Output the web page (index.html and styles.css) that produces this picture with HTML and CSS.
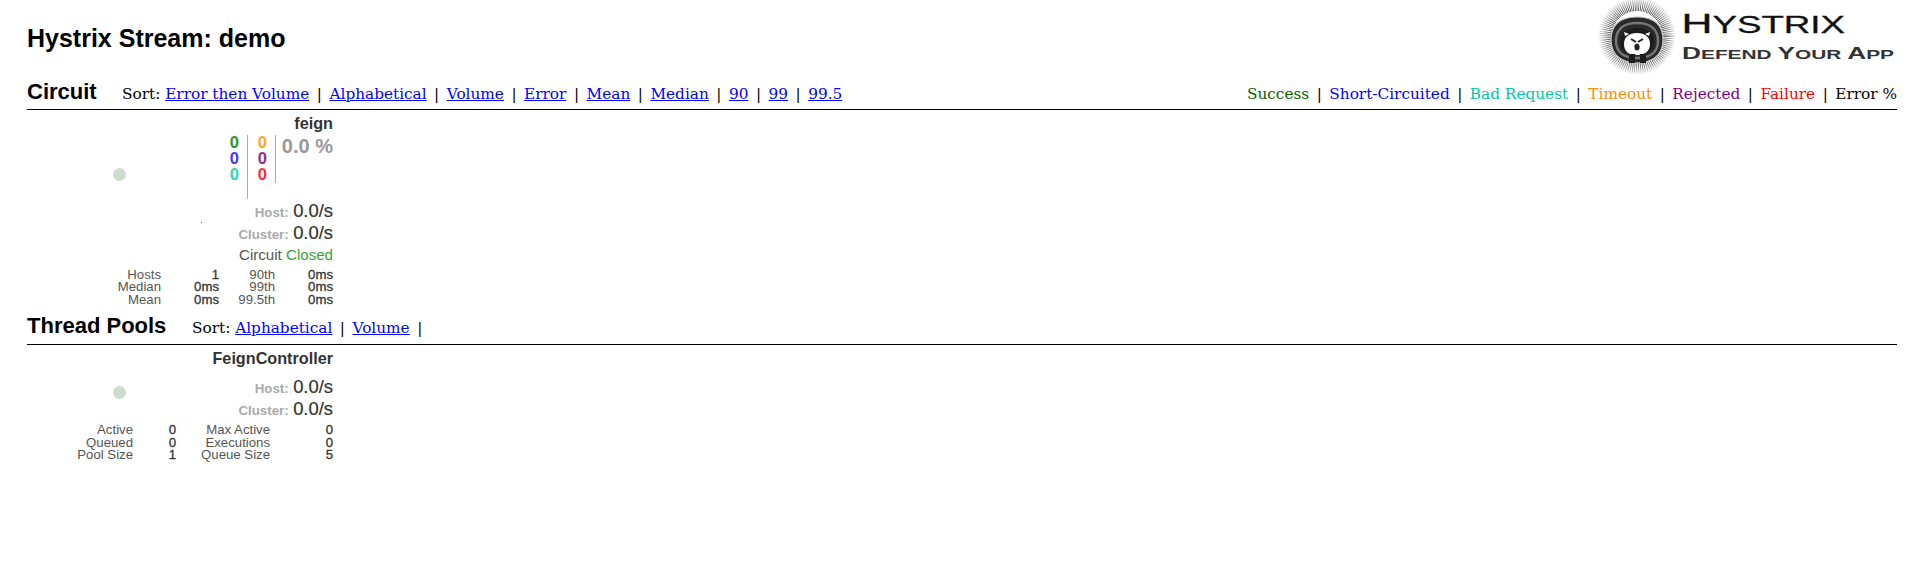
FILE: index.html
```html
<!DOCTYPE html>
<html lang="en">
<head>
<meta charset="utf-8">
<title>Hystrix Stream: demo</title>
<link rel="stylesheet" href="styles.css">
</head>
<body>
<header class="page-header">
  <h1 class="page-title">Hystrix Stream: demo</h1>
  <svg class="logo" width="300" height="75" viewBox="0 0 300 75" aria-label="Hystrix logo">
    <defs>
      <radialGradient id="halo" gradientUnits="userSpaceOnUse" cx="40" cy="36" r="39">
        <stop offset="0.6" stop-color="#222"/>
        <stop offset="0.8" stop-color="#888"/>
        <stop offset="1" stop-color="#fff"/>
      </radialGradient>
      <filter id="soft" x="-10%" y="-10%" width="120%" height="120%"><feGaussianBlur stdDeviation="0.45"/></filter>
    </defs>
    <g filter="url(#soft)">
      <circle class="spikes" cx="40" cy="36" r="32"/>
      <path d="M14 40C14 24 24 17 40 17S66 24 66 40S54 63 40 63S14 56 14 40Z" fill="#2a2a2a" stroke="#ccc" stroke-width="1.2"/>
      <path d="M19 41C19 29 27 23 40 23S61 29 61 41S52 58 40 58S19 53 19 41Z" fill="none" stroke="#777" stroke-width="2.5"/>
      <path d="M23 42C23 33 30 28 40 28S57 33 57 42S50 55 40 55S23 51 23 42Z" fill="#1c1c1c"/>
      <path d="M27 44C27 37 32 33 40 33S53 37 53 44S48 55 40 55S27 52 27 44Z" fill="#fff"/>
      <path d="M28 36L27 32L32 34M52 36L53 32L48 34" fill="#fff"/>
      <path d="M34 39L39 42M46 39L41 42" stroke="#222" stroke-width="2"/>
      <ellipse cx="40" cy="47" rx="2.6" ry="3.6" fill="#222"/>
      <path d="M32 54h6v9h-6zM43 54h6v9h-6z" fill="#1a1a1a"/>
    </g>
    <text class="logo-big" x="84.5" y="33" textLength="163.5" lengthAdjust="spacingAndGlyphs">H<tspan class="logo-big-sc">YSTRIX</tspan></text>
    <text class="logo-small" x="85" y="59" textLength="212" lengthAdjust="spacingAndGlyphs">D<tspan class="logo-small-sc">EFEND </tspan>Y<tspan class="logo-small-sc">OUR </tspan>A<tspan class="logo-small-sc">PP</tspan></text>
  </svg>
</header>

<section class="section-head">
  <h2 class="section-title">Circuit</h2>
  <div class="sort circuit-sort">Sort: <a href="#">Error then Volume</a><i>|</i><a href="#">Alphabetical</a><i>|</i><a href="#">Volume</a><i>|</i><a href="#">Error</a><i>|</i><a href="#">Mean</a><i>|</i><a href="#">Median</a><i>|</i><a href="#">90</a><i>|</i><a href="#">99</a><i>|</i><a href="#">99.5</a></div>
  <div class="legend"><span class="c-success">Success</span><i>|</i><span class="c-short">Short-Circuited</span><i>|</i><span class="c-bad">Bad Request</span><i>|</i><span class="c-timeout">Timeout</span><i>|</i><span class="c-rejected">Rejected</span><i>|</i><span class="c-failure">Failure</span><i>|</i><span>Error %</span></div>
</section>

<article class="monitor circuit">
  <div class="name">feign</div>
  <div class="circuit-top">
    <div class="dot-wrap"><span class="dot"></span></div>
    <div class="counts tall">
      <span class="n-success">0</span><span class="n-short">0</span><span class="n-bad">0</span>
    </div>
    <div class="counts">
      <span class="n-timeout">0</span><span class="n-rejected">0</span><span class="n-failure">0</span>
    </div>
    <div class="error-rate">0.0 %</div>
  </div>
  <div class="rate-row"><span class="rate-label">Host:</span> <span class="rate-value">0.0/s</span></div>
  <div class="rate-row"><span class="rate-label">Cluster:</span> <span class="rate-value">0.0/s</span></div>
  <div class="status">Circuit <span class="closed">Closed</span></div>
  <div class="stats stats-circuit">
    <span>Hosts</span><b>1</b><span>90th</span><b>0ms</b>
    <span>Median</span><b>0ms</b><span>99th</span><b>0ms</b>
    <span>Mean</span><b>0ms</b><span>99.5th</span><b>0ms</b>
  </div>
  <span class="speck"></span>
</article>

<section class="section-head pools-head">
  <h2 class="section-title">Thread Pools</h2>
  <div class="sort pool-sort">Sort: <a href="#">Alphabetical</a><i>|</i><a href="#">Volume</a><i>|</i></div>
</section>

<article class="monitor pool">
  <div class="name pool-name">FeignController</div>
  <div class="pool-top">
    <div class="dot-wrap"><span class="dot"></span></div>
    <div class="pool-rates">
      <div class="rate-row"><span class="rate-label">Host:</span> <span class="rate-value">0.0/s</span></div>
      <div class="rate-row"><span class="rate-label">Cluster:</span> <span class="rate-value">0.0/s</span></div>
    </div>
  </div>
  <div class="stats stats-pool">
    <span>Active</span><b>0</b><span>Max Active</span><b>0</b>
    <span>Queued</span><b>0</b><span>Executions</span><b>0</b>
    <span>Pool Size</span><b>1</b><span>Queue Size</span><b>5</b>
  </div>
</article>
</body>
</html>
```
FILE: styles.css
```css
* { box-sizing: border-box; }
html, body { margin: 0; padding: 0; background: #fff; }
body { width: 1916px; height: 575px; overflow: hidden; padding: 0 19px 0 27px; font-family: "Liberation Sans", Arial, sans-serif; color: #000; }

.page-header { height: 77px; display: flex; justify-content: space-between; align-items: flex-start; }
.page-title { margin: 24px 0 0; font-size: 25px; line-height: 28px; font-weight: bold; }
.logo { flex: none; }
.spikes { fill: none; stroke: url(#halo); stroke-width: 14; stroke-dasharray: 1 1; }
.logo-big { font-family: "Liberation Sans", sans-serif; font-size: 28px; fill: #111; stroke: #111; stroke-width: .3; }
.logo-big-sc { font-size: 24px; }
.logo-small { font-family: "Liberation Sans", sans-serif; font-size: 17px; font-weight: bold; fill: #333; }
.logo-small-sc { font-size: 13.5px; }

.section-head { height: 33px; border-bottom: 1px solid #000; display: flex; align-items: flex-start; }
.section-title { margin: 1px 0 0; font-size: 22px; line-height: 28px; font-weight: bold; width: 95px; flex: none; }
.sort, .legend { font-family: "DejaVu Serif", serif; font-size: 15.3px; line-height: 20px; margin-top: 7px; white-space: nowrap; }
.sort i, .legend i { font-style: normal; margin: 0 7.5px; color: #000; }
a { color: #00f; text-decoration: underline; }
.legend { margin-left: auto; }
.c-success { color: #006400; }
.c-short { color: #00f; }
.c-bad { color: #00c8a0; }
.c-timeout { color: #ff8c00; }
.c-rejected { color: #800080; }
.c-failure { color: #f00; }

.monitor { width: 306px; position: relative; color: #333; }
.circuit { height: 200px; }
.name { text-align: right; font-size: 16.2px; font-weight: bold; line-height: 18px; padding-top: 4px; height: 25px; color: #333; }
.circuit-top { display: flex; height: 65px; }
.dot-wrap { width: 184px; flex: none; display: flex; justify-content: center; padding-top: 33px; }
.dot { width: 13px; height: 13px; border-radius: 50%; background: #cddccd; display: block; }
.counts span { display: block; font-size: 16.5px; line-height: 16px; font-weight: bold; text-align: right; }
.counts span:first-child { margin-top: -1px; }
.n-success { color: #2a9a2a; }
.n-short { color: #3c3cff; }
.n-bad { color: #2fd8ae; }
.n-timeout { color: #ffa62b; }
.n-rejected { color: #902d90; }
.n-failure { color: #ff2d3c; }
.counts { flex: none; width: 28px; padding-right: 8px; border-right: 1px solid #aaa; height: 48px; }
.counts.tall { width: 37px; height: 64px; }
.error-rate { flex: 1; text-align: right; font-size: 20px; font-weight: bold; color: #999; line-height: 20px; white-space: nowrap; padding-top: 1px; }

.rate-row { text-align: right; line-height: 22px; height: 21px; white-space: nowrap; }
.rate-row + .rate-row { margin-top: 1px; }
.rate-label { font-size: 13.3px; font-weight: bold; color: #aaa; }
.rate-value { font-size: 18.4px; color: #333; -webkit-text-stroke: 0.2px #333; }
.status { text-align: right; font-size: 15.1px; line-height: 22px; color: #555; margin-top: 1px; }
.closed { color: #3a9f3a; }

.stats { display: grid; font-size: 13.2px; line-height: 12.7px; color: #555; text-align: right; margin-top: 2.5px; white-space: nowrap; }
.stats b { font-weight: normal; color: #333; -webkit-text-stroke: 0.3px #333; }
.stats-circuit { grid-template-columns: 134px 58px 56px 58px; }
.stats-pool { grid-template-columns: 106px 43px 94px 63px; margin-top: 5px; }
.speck { position: absolute; left: 174px; top: 112px; width: 1px; height: 1px; background: #557; }

.pools-head { height: 35px; }
.pools-head .section-title { width: 165px; margin-top: 2px; }
.pool-sort { margin-top: 8px; }
.pool-sort i:last-child { margin-right: 0; }
.pool-name { height: 26px; padding-top: 4px; }
.pool { height: 120px; }
.pool-top { display: flex; height: 48px; }
.pool-top .dot-wrap { padding-top: 15px; }
.pool-rates { flex: 1; padding-top: 5px; }
```
